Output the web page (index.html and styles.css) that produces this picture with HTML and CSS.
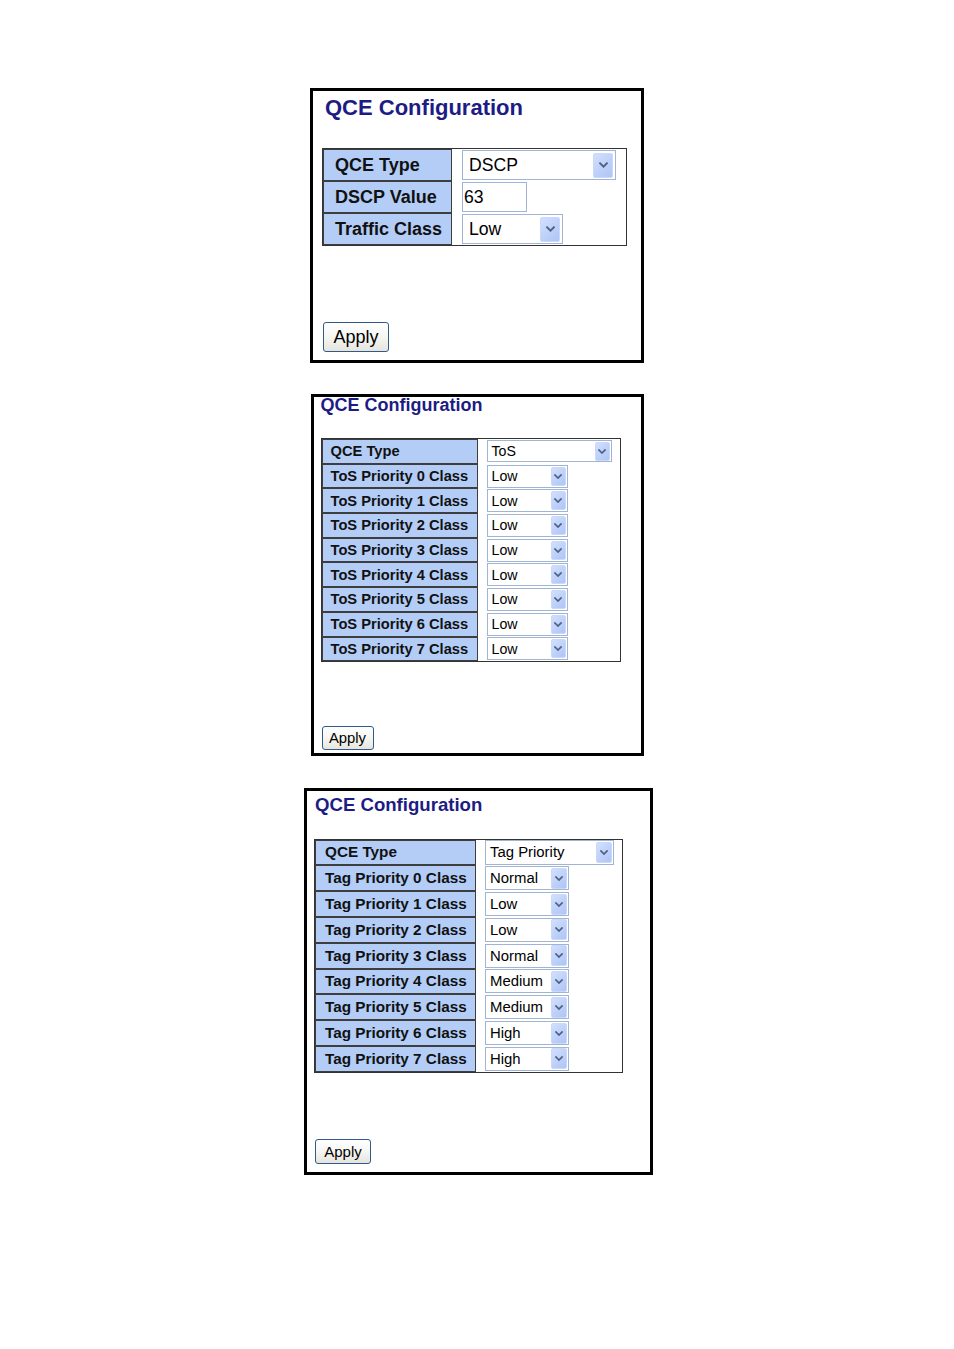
FILE: index.html
```html
<!DOCTYPE html>
<html>
<head>
<meta charset="utf-8">
<title>QCE Configuration</title>
<link rel="stylesheet" href="styles.css">
</head>
<body>
<div class="page">

  <section class="panel p1">
    <h1 class="title">QCE Configuration</h1>
    <table class="cfg">
      <tr>
        <td class="lbl">QCE Type</td>
        <td class="val"><div class="sel wide"><span class="txt">DSCP</span><span class="arr"><svg viewBox="0 0 8 5"><path d="M1 1 L4 4 L7 1"/></svg></span></div></td>
      </tr>
      <tr>
        <td class="lbl">DSCP Value</td>
        <td class="val"><div class="inp">63</div></td>
      </tr>
      <tr>
        <td class="lbl">Traffic Class</td>
        <td class="val"><div class="sel"><span class="txt">Low</span><span class="arr"><svg viewBox="0 0 8 5"><path d="M1 1 L4 4 L7 1"/></svg></span></div></td>
      </tr>
    </table>
    <button class="apply">Apply</button>
  </section>

  <section class="panel p2">
    <h1 class="title">QCE Configuration</h1>
    <table class="cfg">
      <tr><td class="lbl">QCE Type</td><td class="val"><div class="sel wide"><span class="txt">ToS</span><span class="arr"><svg viewBox="0 0 8 5"><path d="M1 1 L4 4 L7 1"/></svg></span></div></td></tr>
      <tr><td class="lbl">ToS Priority 0 Class</td><td class="val"><div class="sel"><span class="txt">Low</span><span class="arr"><svg viewBox="0 0 8 5"><path d="M1 1 L4 4 L7 1"/></svg></span></div></td></tr>
      <tr><td class="lbl">ToS Priority 1 Class</td><td class="val"><div class="sel"><span class="txt">Low</span><span class="arr"><svg viewBox="0 0 8 5"><path d="M1 1 L4 4 L7 1"/></svg></span></div></td></tr>
      <tr><td class="lbl">ToS Priority 2 Class</td><td class="val"><div class="sel"><span class="txt">Low</span><span class="arr"><svg viewBox="0 0 8 5"><path d="M1 1 L4 4 L7 1"/></svg></span></div></td></tr>
      <tr><td class="lbl">ToS Priority 3 Class</td><td class="val"><div class="sel"><span class="txt">Low</span><span class="arr"><svg viewBox="0 0 8 5"><path d="M1 1 L4 4 L7 1"/></svg></span></div></td></tr>
      <tr><td class="lbl">ToS Priority 4 Class</td><td class="val"><div class="sel"><span class="txt">Low</span><span class="arr"><svg viewBox="0 0 8 5"><path d="M1 1 L4 4 L7 1"/></svg></span></div></td></tr>
      <tr><td class="lbl">ToS Priority 5 Class</td><td class="val"><div class="sel"><span class="txt">Low</span><span class="arr"><svg viewBox="0 0 8 5"><path d="M1 1 L4 4 L7 1"/></svg></span></div></td></tr>
      <tr><td class="lbl">ToS Priority 6 Class</td><td class="val"><div class="sel"><span class="txt">Low</span><span class="arr"><svg viewBox="0 0 8 5"><path d="M1 1 L4 4 L7 1"/></svg></span></div></td></tr>
      <tr><td class="lbl">ToS Priority 7 Class</td><td class="val"><div class="sel"><span class="txt">Low</span><span class="arr"><svg viewBox="0 0 8 5"><path d="M1 1 L4 4 L7 1"/></svg></span></div></td></tr>
    </table>
    <button class="apply">Apply</button>
  </section>

  <section class="panel p3">
    <h1 class="title">QCE Configuration</h1>
    <table class="cfg">
      <tr><td class="lbl">QCE Type</td><td class="val"><div class="sel wide"><span class="txt">Tag Priority</span><span class="arr"><svg viewBox="0 0 8 5"><path d="M1 1 L4 4 L7 1"/></svg></span></div></td></tr>
      <tr><td class="lbl">Tag Priority 0 Class</td><td class="val"><div class="sel"><span class="txt">Normal</span><span class="arr"><svg viewBox="0 0 8 5"><path d="M1 1 L4 4 L7 1"/></svg></span></div></td></tr>
      <tr><td class="lbl">Tag Priority 1 Class</td><td class="val"><div class="sel"><span class="txt">Low</span><span class="arr"><svg viewBox="0 0 8 5"><path d="M1 1 L4 4 L7 1"/></svg></span></div></td></tr>
      <tr><td class="lbl">Tag Priority 2 Class</td><td class="val"><div class="sel"><span class="txt">Low</span><span class="arr"><svg viewBox="0 0 8 5"><path d="M1 1 L4 4 L7 1"/></svg></span></div></td></tr>
      <tr><td class="lbl">Tag Priority 3 Class</td><td class="val"><div class="sel"><span class="txt">Normal</span><span class="arr"><svg viewBox="0 0 8 5"><path d="M1 1 L4 4 L7 1"/></svg></span></div></td></tr>
      <tr><td class="lbl">Tag Priority 4 Class</td><td class="val"><div class="sel"><span class="txt">Medium</span><span class="arr"><svg viewBox="0 0 8 5"><path d="M1 1 L4 4 L7 1"/></svg></span></div></td></tr>
      <tr><td class="lbl">Tag Priority 5 Class</td><td class="val"><div class="sel"><span class="txt">Medium</span><span class="arr"><svg viewBox="0 0 8 5"><path d="M1 1 L4 4 L7 1"/></svg></span></div></td></tr>
      <tr><td class="lbl">Tag Priority 6 Class</td><td class="val"><div class="sel"><span class="txt">High</span><span class="arr"><svg viewBox="0 0 8 5"><path d="M1 1 L4 4 L7 1"/></svg></span></div></td></tr>
      <tr><td class="lbl">Tag Priority 7 Class</td><td class="val"><div class="sel"><span class="txt">High</span><span class="arr"><svg viewBox="0 0 8 5"><path d="M1 1 L4 4 L7 1"/></svg></span></div></td></tr>
    </table>
    <button class="apply">Apply</button>
  </section>

</div>
</body>
</html>
```

FILE: styles.css
```css
html, body {
  margin: 0;
  padding: 0;
  background: #ffffff;
}

body {
  font-family: "Liberation Sans", Arial, sans-serif;
  color: #000000;
}

.page {
  display: flex;
  flex-direction: column;
  align-items: center;
  padding-top: 88px;
}

.panel {
  box-sizing: border-box;
  border: 3px solid #000000;
  display: flex;
  flex-direction: column;
  align-items: flex-start;
  background: #ffffff;
}

.title {
  margin: 0;
  font-weight: bold;
  line-height: 1;
  color: #1c1c84;
  white-space: nowrap;
}

.cfg {
  border: 1px solid #333333;
  border-spacing: 0;
  background: #ffffff;
}

.lbl {
  background: #b3cdf7;
  border: 1px solid #3e3e3e;
  font-weight: bold;
  white-space: nowrap;
  padding-top: 0;
  padding-bottom: 0;
  padding-right: 0;
  vertical-align: middle;
  color: #111111;
}

.val {
  padding-top: 0;
  padding-bottom: 0;
  padding-right: 0;
  vertical-align: middle;
}

.sel {
  box-sizing: border-box;
  display: flex;
  align-items: center;
  border: 1px solid #9fb5d3;
  background: #ffffff;
  white-space: nowrap;
}

.sel .txt {
  flex: 1;
  overflow: hidden;
}

.arr {
  box-sizing: border-box;
  display: flex;
  align-items: center;
  justify-content: center;
  background: linear-gradient(135deg, #d3e0fd 0%, #bccff9 60%, #b0c5f5 100%);
  border: 1px solid #c9d8fb;
  border-radius: 2px;
}

.arr svg {
  display: block;
}

.arr path {
  fill: none;
  stroke: #4d6185;
  stroke-width: 1.7;
  stroke-linecap: square;
}

.inp {
  box-sizing: border-box;
  border: 1px solid #9fb5d3;
  background: #ffffff;
}

.apply {
  box-sizing: border-box;
  margin-top: auto;
  font-family: "Liberation Sans", Arial, sans-serif;
  color: #000000;
  border: 1px solid #2f5b8c;
  border-radius: 3px;
  background: linear-gradient(#ffffff 0%, #f6f6f2 50%, #e6e4dc 100%);
  padding: 0;
  text-align: center;
}

/* ---------- panel 1 (DSCP) ---------- */
.p1 {
  width: 334px;
  height: 275px;
  padding: 6px 0 8px 9px;
}
.p1 .title {
  font-size: 22px;
  margin-left: 3px;
}
.p1 .cfg {
  margin-top: 29px;
}
.p1 .lbl {
  width: 116px;
  height: 30px;
  padding-left: 11px;
  font-size: 18px;
}
.p1 .val {
  width: 164px;
  padding-left: 10px;
}
.p1 .sel {
  width: 101px;
  height: 30px;
  font-size: 17.6px;
}
.p1 .sel.wide {
  width: 154px;
}
.p1 .sel .txt {
  padding-left: 6px;
}
.p1 .arr {
  width: 20px;
  height: 25px;
  margin-right: 2px;
}
.p1 .arr svg {
  width: 9px;
  height: 6px;
}
.p1 .inp {
  width: 65px;
  height: 30px;
  line-height: 28px;
  padding-left: 1px;
  font-size: 17.6px;
}
.p1 .apply {
  width: 66px;
  height: 30px;
  font-size: 18px;
  margin-left: 1px;
}

/* ---------- panel 2 (ToS) ---------- */
.p2 {
  width: 333px;
  height: 362px;
  margin-top: 31px;
  padding: 0 0 3px 7px;
}
.p2 .title {
  font-size: 18px;
  margin-top: -1px;
}
.p2 .cfg {
  margin-top: 24px;
}
.p2 .lbl {
  width: 146px;
  height: 22.7px;
  padding-left: 8px;
  font-size: 14.7px;
}
.p2 .val {
  width: 133px;
  padding-left: 9px;
}
.p2 .sel {
  width: 81px;
  height: 23px;
  font-size: 14.2px;
}
.p2 .sel.wide {
  width: 125px;
  height: 22px;
}
.p2 .sel .txt {
  padding-left: 4px;
}
.p2 .arr {
  width: 15px;
  height: 19px;
  margin-right: 1px;
}
.p2 .arr svg {
  width: 8px;
  height: 5px;
}
.p2 .apply {
  width: 52px;
  height: 24px;
  font-size: 14.8px;
  margin-left: 1px;
}

/* ---------- panel 3 (Tag Priority) ---------- */
.p3 {
  width: 349px;
  height: 387px;
  margin-top: 32px;
  margin-left: 3px;
  padding: 5px 0 8px 7px;
}
.p3 .title {
  font-size: 18.6px;
  margin-left: 1px;
}
.p3 .cfg {
  margin-top: 24px;
}
.p3 .lbl {
  width: 150px;
  height: 23.8px;
  padding-left: 9px;
  font-size: 15.3px;
}
.p3 .val {
  width: 137px;
  padding-left: 9px;
}
.p3 .sel {
  width: 84px;
  height: 24px;
  font-size: 14.9px;
}
.p3 .sel.wide {
  width: 129px;
  height: 25px;
}
.p3 .sel .txt {
  padding-left: 4px;
}
.p3 .arr {
  width: 16px;
  height: 21px;
  margin-right: 1px;
}
.p3 .arr svg {
  width: 8px;
  height: 5px;
}
.p3 .apply {
  width: 56px;
  height: 25px;
  font-size: 15px;
  margin-left: 1px;
}
```
